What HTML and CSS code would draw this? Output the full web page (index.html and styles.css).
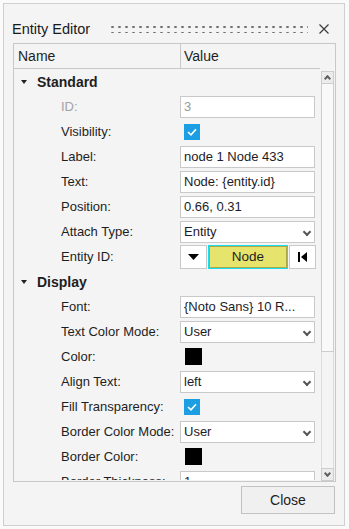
FILE: index.html
```html
<!DOCTYPE html>
<html lang="en">
<head>
	<meta charset="UTF-8">
	<title>Entity Editor</title>
	<link rel="stylesheet" href="styles.css">
</head>
<body>
	<div class="dialog">
		<div class="title_bar">
			<span class="title">Entity Editor</span>
			<span class="grip"></span>
			<span class="close_x"><svg width="10" height="10" viewBox="0 0 10 10"><path d="M0.5 0.5L9.5 9.5M9.5 0.5L0.5 9.5" stroke="#3a3a3a" stroke-width="1.2" fill="none"/></svg></span>
		</div>
		<div class="panel">
			<div class="main">
				<div class="head">
					<div class="h_name">Name</div>
					<div class="h_value">Value</div>
				</div>
				<div class="rows">
					<div class="row group"><span class="caret"></span>Standard</div>
					<div class="row"><div class="label disabled">ID:</div><div class="value"><div class="box disabled">3</div></div></div>
					<div class="row"><div class="label">Visibility:</div><div class="value"><span class="check"><svg width="10" height="8" viewBox="0 0 10 8"><path d="M1 4L4 6.8L9 1.2" stroke="#fff" stroke-width="1.6" fill="none"/></svg></span></div></div>
					<div class="row"><div class="label">Label:</div><div class="value"><div class="box">node 1 Node 433</div></div></div>
					<div class="row"><div class="label">Text:</div><div class="value"><div class="box">Node: {entity.id}</div></div></div>
					<div class="row"><div class="label">Position:</div><div class="value"><div class="box">0.66, 0.31</div></div></div>
					<div class="row"><div class="label">Attach Type:</div><div class="value"><div class="box select">Entity<i class="chev"></i></div></div></div>
					<div class="row"><div class="label">Entity ID:</div><div class="value entity">
						<span class="tri_btn"><svg width="11" height="6" viewBox="0 0 11 6"><path d="M0 0H11L5.5 6Z" fill="#000"/></svg></span>
						<span class="node_btn">Node</span>
						<span class="first_btn"><svg width="9" height="10" viewBox="0 0 9 10"><rect x="0" y="0" width="2" height="10" fill="#000"/><path d="M9 0V10L3 5Z" fill="#000"/></svg></span>
					</div></div>
					<div class="row group"><span class="caret"></span>Display</div>
					<div class="row"><div class="label">Font:</div><div class="value"><div class="box">{Noto Sans} 10 R...</div></div></div>
					<div class="row"><div class="label">Text Color Mode:</div><div class="value"><div class="box select">User<i class="chev"></i></div></div></div>
					<div class="row"><div class="label">Color:</div><div class="value"><span class="swatch"></span></div></div>
					<div class="row"><div class="label">Align Text:</div><div class="value"><div class="box select">left<i class="chev"></i></div></div></div>
					<div class="row"><div class="label">Fill Transparency:</div><div class="value"><span class="check"><svg width="10" height="8" viewBox="0 0 10 8"><path d="M1 4L4 6.8L9 1.2" stroke="#fff" stroke-width="1.6" fill="none"/></svg></span></div></div>
					<div class="row"><div class="label">Border Color Mode:</div><div class="value"><div class="box select">User<i class="chev"></i></div></div></div>
					<div class="row"><div class="label">Border Color:</div><div class="value"><span class="swatch"></span></div></div>
					<div class="row"><div class="label">Border Thickness:</div><div class="value"><div class="box select">1<i class="chev"></i></div></div></div>
				</div>
			</div>
			<div class="scrollbar">
				<div class="sb_btn"><i class="chev up"></i></div>
				<div class="sb_thumb"></div>
				<div class="sb_track"></div>
				<div class="sb_btn"><i class="chev"></i></div>
			</div>
		</div>
		<div class="footer">
			<span class="close_btn">Close</span>
		</div>
	</div>
</body>
</html>
```
FILE: styles.css
```css
/*reset*/
body{margin: 0; padding: 0; background: #fafafa; font-family: "Liberation Sans", Arial, sans-serif; font-size: 13px; color: #1e1e1e;}

/*dialog*/
.dialog{margin: 3px 0 0 3px; width: 340px; height: 521px; border: 1px solid #cfcfcf; background: #f4f4f4; display: flex; flex-direction: column;}
.title_bar{height: 39px; padding: 15px 0 4px 8px; box-sizing: border-box; display: flex; align-items: center;}
.title{font-size: 14.5px; line-height: 20px; color: #1a1a1a;}
.grip{width: 199px; height: 8px; margin-left: 19px; background-image: radial-gradient(circle, #6e6e6e 1px, transparent 1.4px); background-size: 7px 6px; background-position: 0 -1px;}
.close_x{display: flex; margin-left: 11px;}

/*property grid*/
.panel{margin-left: 9px; width: 321px; height: 437px; border: 1px solid #c8c8c8; display: flex;}
.main{width: 306px; display: flex; flex-direction: column;}
.head{height: 24px; border-bottom: 1px solid #c8c8c8; display: flex; font-size: 14px; line-height: 24px;}
.h_name{width: 162px; padding-left: 4px; border-right: 1px solid #c8c8c8;}
.h_value{padding-left: 3px;}
.rows{height: 411px; overflow: hidden;}
.row{height: 25px; display: flex; align-items: center;}
.row.group{font-weight: bold; font-size: 14px; padding-left: 7px;}
.caret{width: 0; height: 0; border-left: 3.5px solid transparent; border-right: 3.5px solid transparent; border-top: 4px solid #222; margin-right: 10px;}
.label{width: 119px; padding-left: 47px; white-space: nowrap; overflow: hidden;}
.label.disabled{color: #a3a3a3;}
.value{flex: 1; display: flex; align-items: center;}
.box{width: 135px; height: 22px; box-sizing: border-box; border: 1px solid #c9c9c9; background: #fff; padding-left: 3px; line-height: 20px; position: relative; white-space: nowrap; color: #1c1c28;}
.box.disabled{color: #9a9a9a;}
.chev{position: absolute; right: 4px; top: 7px; width: 4px; height: 4px; border-right: 2px solid #555; border-bottom: 2px solid #555; transform: rotate(45deg);}
.check{width: 16px; height: 16px; margin-left: 4px; background: #1c9fe2; display: flex; align-items: center; justify-content: center;}
.swatch{width: 17px; height: 17px; margin-left: 5px; background: #000;}

/*entity picker*/
.entity{height: 24px; align-self: flex-end;}
.tri_btn,.first_btn{width: 27px; height: 24px; box-sizing: border-box; border: 1px solid #c9c9c9; background: #fff; display: flex; align-items: center; justify-content: center;}
.node_btn{width: 80px; height: 24px; margin: 0 1px; box-sizing: border-box; border: 1px solid #19dcef; box-shadow: inset 0 0 0 1px #a9a94a; background: #e6e46c; text-align: center; line-height: 22px; font-size: 13.5px;}

/*scrollbar*/
.scrollbar{width: 15px; padding-top: 27px; display: flex; flex-direction: column; align-items: center;}
.sb_btn{width: 13px; height: 13px; box-sizing: border-box; border: 1px solid #cdcdcd; background: #ececec; position: relative;}
.sb_btn .chev{right: 3px; top: 2px; width: 3px; height: 3px; border-color: #606060;}
.sb_btn .chev.up{top: 4px; transform: rotate(-135deg);}
.sb_thumb{width: 13px; height: 268px; box-sizing: border-box; border: 1px solid #cdcdcd; border-top: none; background: #f9f9f9;}
.sb_track{width: 13px; flex: 1; margin-bottom: 0; border-left: 1px solid #dcdcdc; border-right: 1px solid #dcdcdc; box-sizing: border-box;}

/*footer*/
.footer{display: flex; justify-content: flex-end; padding: 4px 9px 0 0;}
.close_btn{width: 94px; height: 28px; box-sizing: border-box; border: 1px solid #c2c2c2; background: #f0f0f0; text-align: center; line-height: 26px; font-size: 14px;}
```
